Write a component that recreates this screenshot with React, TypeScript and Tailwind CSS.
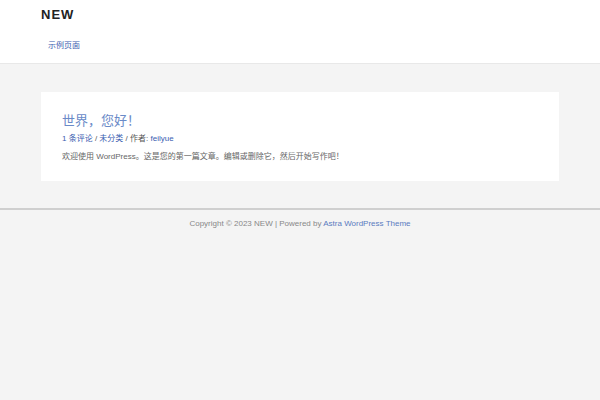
export default function App() {
  const cjk = "font-['Liberation_Sans','Noto_Sans_CJK_SC',sans-serif]";

  return (
    <div className={`min-h-[400px] w-full bg-[#f4f4f4] ${cjk}`}>
      {/* header */}
      <header className="h-[64px] bg-white border-b border-[#e8e8e8] px-[41px]">
        <div className="pt-[8px] text-[13px] font-bold tracking-[1px] text-[#222] leading-[14px]">
          NEW
        </div>
        <nav className="mt-[19px] pl-[7px] text-[8px] leading-[10px]">
          <a href="#" className="text-[#3a5db0]">
            示例页面
          </a>
        </nav>
      </header>

      {/* main */}
      <main className="px-[41px] pt-[28px] pb-[27px]">
        <article className="h-[89px] bg-white px-[21px] pt-[21px]">
          <h2 className="text-[13px] leading-[16px] text-[#6a8ac8]">世界，您好！</h2>
          <div className="mt-[5px] text-[8px] leading-[10px] text-[#555]">
            <a href="#" className="text-[#3a5db0]">1 条评论</a>
            {" / "}
            <a href="#" className="text-[#3a5db0]">未分类</a>
            {" / "}
            作者: <a href="#" className="text-[#3a5db0]">feilyue</a>
          </div>
          <p className="mt-[8px] text-[8px] leading-[10px] text-[#666]">
            欢迎使用 WordPress。这是您的第一篇文章。编辑或删除它，然后开始写作吧！
          </p>
        </article>
      </main>

      {/* footer */}
      <footer className="border-t-2 border-[#cfcfcf] pt-[9px] text-center text-[8px] leading-[10px] text-[#888]">
        Copyright © 2023 NEW | Powered by{" "}
        <a href="#" className="text-[#5a7bc0]">Astra WordPress Theme</a>
      </footer>
    </div>
  );
}
